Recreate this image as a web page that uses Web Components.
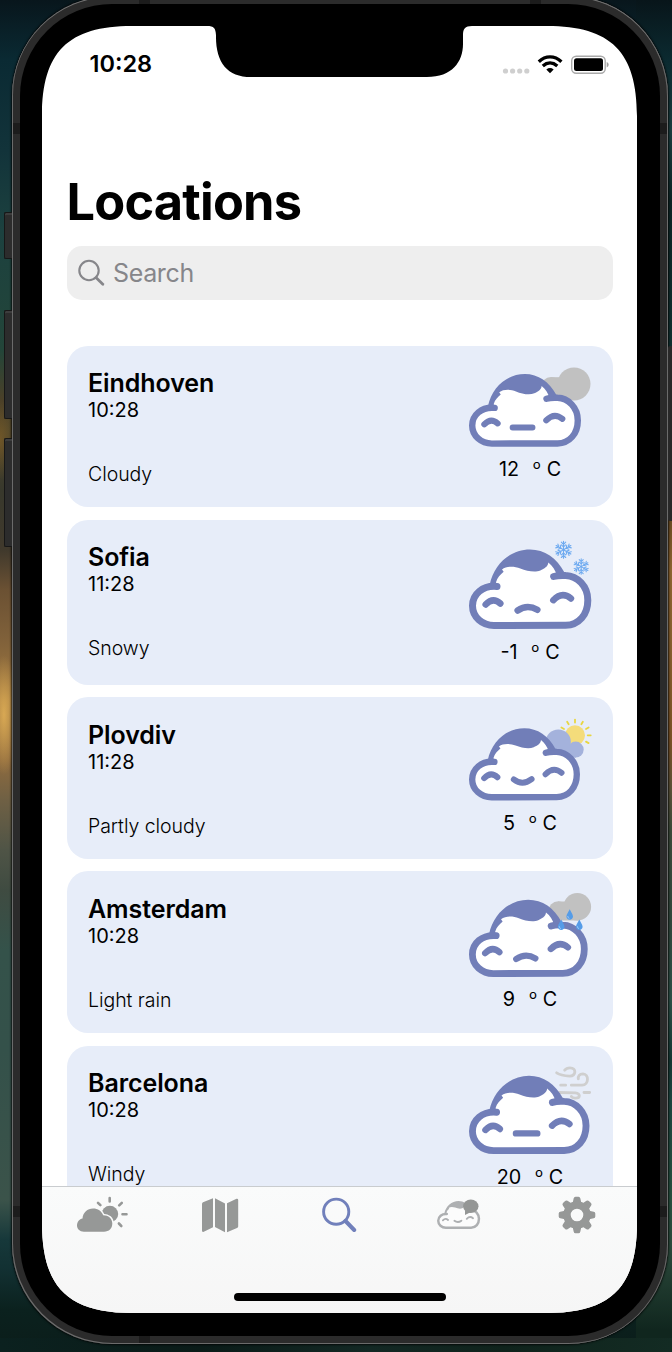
<!DOCTYPE html>
<html lang="en">
<head>
<meta charset="utf-8">
<title>Locations</title>
<style>
html{height:100%}
body{margin:0;width:672px;height:1352px;overflow:hidden;display:flow-root;position:relative;
font-family:Inter,"Liberation Sans",sans-serif;color:#000;
background:
radial-gradient(ellipse 14px 60px at 4px 715px,rgba(236,185,90,.75),transparent),
radial-gradient(ellipse 16px 40px at 0 440px,rgba(150,105,35,.5),transparent),
linear-gradient(90deg,transparent 60px,#0a1a18 150px,#06110f 330px,#0a1a18 520px,transparent 610px) 0 0/100% 40px no-repeat,
linear-gradient(90deg,#0b211f,#0a1b18 30%,#132824 55%,#0f231c 75%,#132b23) 0 1338px/100% 14px no-repeat,
linear-gradient(180deg,#08151a 0,#0b2a30 60px,#1a3d3f 130px,#0c2424 200px,#103030 346px,#6a4c24 520px,#8d6430 570px,#87602f 640px,#7a5225 740px,#5a5238 790px,#3c4a3a 830px,#31483d 920px,#2c5047 1000px,#143834 1060px,#1d4640 1100px,#27503f 1200px,#2c4a3c 1245px,#10261e 1330px) 636px 0/36px 100% no-repeat,
linear-gradient(180deg,#08161c 0,#0a2a33 60px,#12333a 150px,#1c413f 230px,#234539 350px,#4b4028 400px,#4c452c 430px,#38382c 490px,#40392c 550px,#6b5133 590px,#80613a 640px,#a27a40 700px,#8f6b3e 760px,#6f6044 800px,#4f5446 850px,#3f4b41 890px,#34524a 950px,#34514a 1050px,#3b534a 1200px,#16383a 1240px,#123032 1270px,#0b211e 1310px,#0b1d1a 1352px)}
</style>
</head>
<body>
<phone-frame>
  <status-bar slot="status" time="10:28"></status-bar>
  <page-title>Locations</page-title>
  <search-field>Search</search-field>
  <location-list>
    <location-card city="Eindhoven" time="10:28" condition="Cloudy" temp="12" kind="cloudy" style="--h:161.3px"></location-card>
    <location-card city="Sofia" time="11:28" condition="Snowy" temp="-1" kind="snowy" style="--h:165px"></location-card>
    <location-card city="Plovdiv" time="11:28" condition="Partly cloudy" temp="5" kind="partly" style="--h:161.3px"></location-card>
    <location-card city="Amsterdam" time="10:28" condition="Light rain" temp="9" kind="rain" style="--h:162px"></location-card>
    <location-card city="Barcelona" time="10:28" condition="Windy" temp="20" kind="windy" style="--h:164px"></location-card>
  </location-list>
  <tab-bar slot="tabs"></tab-bar>
</phone-frame>

<script>
const define = (name, render) => customElements.define(name, class extends HTMLElement {
  connectedCallback() {
    if (this.shadowRoot) return;
    this.attachShadow({mode: 'open'}).innerHTML = render(this);
  }
});

// Cartoon cloud on a 367 x 238 grid, with one of three mouths.
const cloud = (mouth, y, width, c = '#717eb8', fill = '#fff', face = 19.5) => {
  const mouths = {
    flat: 'M143 175.500L208 175.500',
    sad: 'M146 183Q175 163 205 181',
    smile: 'M148 169Q177 191 207 168'
  };
  return `<g transform="translate(0 ${y}) scale(${width / 367})" stroke-linecap="round" stroke-linejoin="round">
  <path d="M63 112C75 45 125 5 183 5C228 5 262 32 284 76L290 78C325 80 357 110 357 152C357 195 330 226 290 226L75 228C40 228 10 205 10 170C10 135 40 110 63 112Z" fill="${fill}"/>
  <path d="M84 111C40 107 10.500 135 10.500 169C10.500 203 40 228 75 228L290 227.500C330 227 356.500 195 356.500 152C356.500 110 325 79 290 78C274 77 264 78 254 81" fill="none" stroke="${c}" stroke-width="21"/>
  <path d="M62 106C75 43 125 0 183 0C227 0 263 25 287 70L263 76C259 62 251 49 238 39C237 52 226 57 214 63C198 70 174 65 154 57C136 50 113 49 99 60L104 67C94 76 85 84 81 98L84 112Z" fill="${c}"/>
  <path d="M50 165Q72 142 94 162M253 152Q279 125 306 147${mouths[mouth]}" fill="none" stroke="${c}" stroke-width="${face}"/>
  </g>`;
};
const flake = (x, y, r) => `<g transform="translate(${x} ${y}) scale(${r / 9})" stroke="#6eaaf0" stroke-width="1.1" fill="none" stroke-linecap="round">${
  [0, 60, 120, 180, 240, 300].map(a => `<path transform="rotate(${a})" d="M0 0V-8.500M0 -3L-2.200 -5M0 -3L2.200 -5M0 -5.500L-2.200 -7.700M0 -5.500L2.200 -7.700"/>`).join('')}</g>`;
const drop = (x, y) => `<path transform="translate(${x} ${y})" d="M0 -5.300C1 -3 3.300 -.3 3.300 2C3.300 4 1.800 5.200 0 5.200S-3.300 4 -3.300 2C-3.300 -.3 -1 -3 0 -5.300Z" fill="#559ce8"/><path transform="translate(${x} ${y})" d="M-2 1.500Q-1.900 3.500 -.3 4" fill="none" stroke="#a9d0f7" stroke-width=".8"/>`;

const scenes = {
  cloudy: [79, '<g fill="#c1c1c1"><circle cx="105" cy="16" r="16.500"/><circle cx="82" cy="19" r="10"/><path d="M82 9.200H96V29H82Z"/></g>' + cloud('flat', 6, 112)],
  snowy: [88, cloud('sad', 8.5, 122.3) + flake(94.5, 8.8, 9) + flake(112.2, 25.6, 8.2)],
  partly: [81.3, `<g transform="translate(106 16.300)"><circle r="10" fill="#f4dc7b"/>${[-60, -30, 0, 30, 60, 90, 120].map(a => `<path transform="rotate(${a})" d="M0 -12.700V-15.700" stroke="#e8d640" stroke-width="1.800" stroke-linecap="round"/>`).join('')}</g><g fill="#a4b2dc"><circle cx="89.300" cy="23" r="12.600"/><circle cx="106.700" cy="30.600" r="8"/><path d="M89 28H107V38.600H89Z"/></g>` + cloud('smile', 9.3, 111)],
  rain: [83.8, '<g fill="#c1c1c1"><circle cx="108.300" cy="13.800" r="13.800"/><circle cx="89.300" cy="18.300" r="10"/><path d="M89 8.500H100V27.600H89ZM98 20H110V27.600H98Z"/></g>' + cloud('sad', 6.8, 118.7) + drop(100.7, 21.5) + drop(92.2, 31.7) + drop(110.3, 31.7)],
  windy: [86.9, '<g transform="translate(-19 -23.500) scale(.3333)" fill="none" stroke="#cfcfcf" stroke-width="8.500" stroke-linecap="round"><path d="M320 88C332 96 345 97 359 98C379 97 380 73 360 73C352 73 347 76 344 80M332 125H347M364 125H396C418 124 417 92 399 91C388 91 384 98 385 106M402 147H419M328 147L376 148C392 150 392 164 376 164C371 164 366 163 364 159"/></g>' + cloud('flat', 8.8, 120.5)]
};

define('phone-frame', () => `<style>
:host{display:block;position:relative;box-sizing:border-box;width:655.500px;height:1348px;margin:-4px 0 0 12px;padding:8px 7.500px 8px 8px;border-radius:100px;background:#2b2b2b;box-shadow:inset 1px -1px 0 #6b6b6b,inset -1px 0 0 #6b6b6b,inset 0 1px 0 #777,0 0 2px 1px rgba(0,0,0,.75)}
.bezel{box-sizing:border-box;height:100%;padding:22px 23px 23px 22px;background:#000;border-radius:92px}
.screen{width:595px;height:1287px;background:#fff;display:flex;flex-direction:column;
clip-path:path("M0 90C0 26 26 0 90 0H165C172 0 173.500 2 174 9C173.500 36 185 51 209 51H385C410 51 421 36 421 18V9C421 3 423 0 430 0H505C569 0 595 26 595 90V1197C595 1261 569 1287 505 1287H90C26 1287 0 1261 0 1197Z")}
.content{flex:1;min-height:0;overflow:hidden;display:flex;flex-direction:column;padding:0 24.500px}
.key{position:absolute;left:-8px;background:#2c2c2c;border:1px solid #171717;border-right:0;border-radius:2px 0 0 2px;box-sizing:border-box;width:8px;box-shadow:inset 0 2px 0 #3d3d3d}
.key.right{left:655.500px;box-shadow:none;border:0;background:#292929}
.band{position:absolute;width:7px;height:11px;background:#1c1c1c}
</style>
<i class="key" style="top:216px;height:47px"></i><i class="key" style="top:314px;height:109px"></i><i class="key" style="top:442px;height:109px"></i><i class="key right" style="top:350px;height:175px"></i>
<i class="band" style="left:1px;top:127px"></i><i class="band" style="right:1px;top:127px"></i><i class="band" style="left:1px;top:1210px"></i><i class="band" style="right:1px;top:1210px"></i>
<i class="band" style="left:127px;top:1px;width:11px;height:7px"></i><i class="band" style="right:127px;top:1px;width:11px;height:7px"></i><i class="band" style="left:127px;bottom:1px;width:11px;height:7px"></i>
<div class="bezel"><div class="screen"><slot name="status"></slot><div class="content"><slot></slot></div><slot name="tabs"></slot></div></div>`);

define('status-bar', el => `<style>
:host{display:flex;align-items:center;justify-content:space-between;box-sizing:border-box;height:52px;flex:none;padding:24px 28px 0 47.500px;font-size:23.500px;font-weight:600;line-height:28px}
svg{display:block;margin-top:-1px}
</style><span>${el.getAttribute('time')}</span>
<svg width="107" height="22" viewBox="502 52 107 22">
<g fill="#cfcfcf"><circle cx="505.500" cy="70" r="2.600"/><circle cx="512.600" cy="70" r="2.600"/><circle cx="519.700" cy="70" r="2.600"/><circle cx="526.800" cy="70" r="2.600"/></g>
<g fill="none" stroke="#000" stroke-width="3.300"><path d="M538.800 60.700C545.500 54.300 554.500 54.300 561.400 60.700"/><path d="M542.800 64.900C547.300 60.900 552.700 60.900 557.300 64.900"/></g><path d="M546.300 68.400Q550 65.600 553.700 68.400L550 72.200Z"/>
<rect x="571.700" y="55.200" width="33.500" height="17" rx="4.500" fill="none" stroke="#a9a9a9" stroke-width="1.400"/><rect x="574" y="57.300" width="29" height="12.800" rx="2.500"/><path d="M606.700 61V66.500Q608.700 65.500 608.700 63.700T606.700 61Z" fill="#a0a0a0"/></svg>`);

define('page-title', () => `<style>:host{display:block;flex:none;margin-top:93px;height:62px;line-height:62px;font-size:50.500px;font-weight:700;letter-spacing:-.8px}</style><slot></slot>`);

define('search-field', () => `<style>:host{display:flex;align-items:center;gap:8.500px;box-sizing:border-box;width:546px;height:54px;margin-top:13px;padding-left:11px;border-radius:15px;background:#eee;color:#86868a;font-size:25px;letter-spacing:-.35px;flex:none}svg{flex:none}</style>
<svg width="27" height="28" viewBox="0 0 27 28" fill="none" stroke="#86868a"><circle cx="11" cy="11.500" r="9.700" stroke-width="2.100"/><path d="M18.200 18.800L24.800 25.200" stroke-width="2.800" stroke-linecap="round"/></svg><slot></slot>`);

define('location-list', () => `<style>:host{display:flex;flex-direction:column;gap:12.600px;margin-top:46px}</style><slot></slot>`);

define('weather-icon', el => {
  const [h, art] = scenes[el.getAttribute('kind')];
  return `<style>:host{display:block}svg{display:block;overflow:visible}</style><svg width="122" height="${h}" viewBox="0 0 122 ${h}">${art}</svg>`;
});

define('location-card', el => {
  const a = n => el.getAttribute(n);
  return `<style>
:host{display:flex;justify-content:space-between;align-items:flex-start;flex:none;box-sizing:border-box;width:546px;height:var(--h);padding:21.500px;border-radius:21px;background:#e7edf9}
.city{font-size:25px;font-weight:600;line-height:31px;padding-top:.7px;letter-spacing:-.08px}
.time,.cond{font-size:19.500px;line-height:23px}
.time{font-size:20px}
.cond{margin-top:41px;font-weight:300;letter-spacing:-.05px}
.right{display:flex;flex-direction:column;align-items:center}
.temp{margin-top:10.300px;font-size:19.800px;line-height:24px;white-space:pre;display:flex}
.unit{margin-left:13.500px;font-weight:300}
.unit b{font-weight:400}
</style><div><div class="city">${a('city')}</div><div class="time">${a('time')}</div><div class="cond">${a('condition')}</div></div>
<div class="right"><weather-icon kind="${a('kind')}"></weather-icon><div class="temp"><span>${a('temp')}</span><span class="unit">º <b>C</b></span></div></div>`;
});

const gear = () => {
  const tooth = [0, 45, 90, 135, 180, 225, 270, 315].map(r => `<path transform="rotate(${r} 19 19)" d="M14.400 8L15.700 2.300Q16 .7 17.500 .7H20.500Q22 .7 22.300 2.300L23.600 8Z"/>`).join('');
  return `<svg class="nudge" width="38" height="38" viewBox="0 0 38 38" fill="#969897">${tooth}<circle cx="19" cy="19" r="10" fill="none" stroke="#969897" stroke-width="7.400"/></svg>`;
};

define('tab-bar', () => `<style>
:host{display:flex;flex-direction:column;align-items:center;flex:none;box-sizing:border-box;height:127px;border-top:1px solid #c9cccf;background:linear-gradient(#fafbfb,#f6f6f6)}
nav{width:595px;display:grid;grid-template-columns:repeat(5,1fr);height:57px;align-items:center;justify-items:center}
svg{display:block;margin-bottom:2px}.nudge{margin-right:2px}.home{width:212px;height:8px;border-radius:4px;background:#000;margin-top:49px}
</style><nav>
<svg width="52" height="38" viewBox="76 1196 52 38"><g stroke="#969897" stroke-width="2.600" stroke-linecap="round"><path d="M109.700 1198V1201.500M98 1202.800L100.400 1205.200M121.800 1202.800L119.200 1205.400M122.500 1214.300H126.500M118.900 1223.500L121.300 1226"/></g><circle cx="109.900" cy="1214" r="8.300" fill="#969897"/><path d="M84 1231.700C79.500 1231.700 77 1228.800 77 1225.500C77 1222 79.500 1219.200 82.500 1218.600C83 1212.500 87.500 1208.600 93 1208.600C98 1208.600 101.500 1211.200 103.200 1215.200C108.500 1215.200 112.300 1218.500 112.300 1223.500C112.300 1228.500 109 1231.700 104 1231.700Z" fill="#969897" stroke="#f9fafa" stroke-width="3" paint-order="stroke"/></svg>
<svg class="nudge" width="38" height="36" viewBox="201 1197 38 36" fill="#969897"><path d="M202 1204Q202 1203 203 1202.300L213 1198.300V1227.300L203.300 1232Q202 1232 202 1230.500ZM215 1198.300L225 1203.500V1232.200L215 1227ZM227 1203.200L236.500 1198.800Q238.200 1198.500 238.200 1200V1226.500Q238 1227.500 237 1228L227 1232.200Z"/></svg>
<svg class="nudge" width="36" height="36" viewBox="321 1197 36 36" fill="none" stroke="#7180bb"><circle cx="336.200" cy="1211.700" r="12.600" stroke-width="2.900"/><path d="M345.500 1221L354.200 1230" stroke-width="4" stroke-linecap="round"/></svg>
<svg width="44" height="32" viewBox="0 0 44 32">${cloud('smile', 1.9, 43.2, '#aeb0b2', '#fcfcfc', 16)}<ellipse cx="33.800" cy="7.200" rx="7.700" ry="6.800" fill="#949695"/><path d="M28 11V16L34 13Z" fill="#949695"/></svg>
${gear()}
</nav><div class="home"></div>`);
</script>
</body>
</html>
